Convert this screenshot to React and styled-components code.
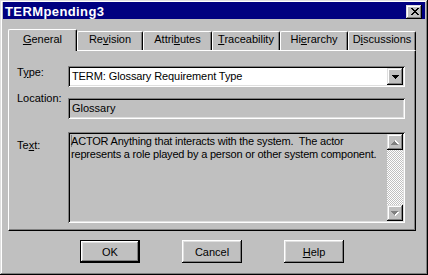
import React from "react";
import styled, { createGlobalStyle } from "styled-components";

const GlobalStyle = createGlobalStyle`
  html, body {
    margin: 0;
    padding: 0;
    background: #c0c0c0;
  }
  body {
    font-family: "Liberation Sans", Arial, sans-serif;
    font-size: 11px;
    color: #000;
  }
`;

const tabs = [
  { id: "general", label: ["", "G", "eneral"], width: 69, active: true },
  { id: "revision", label: ["Re", "v", "ision"], width: 66 },
  { id: "attributes", label: ["Attri", "b", "utes"], width: 69 },
  { id: "traceability", label: ["", "T", "raceability"], width: 68 },
  { id: "hierarchy", label: ["Hi", "e", "rarchy"], width: 68 },
  { id: "discussions", label: ["D", "i", "scussions"], width: 68 },
];

const raised = `
  box-shadow: inset -1px -1px #000, inset 1px 1px #dfdfdf,
    inset -2px -2px #808080, inset 2px 2px #fff;
`;

const sunken = `
  box-shadow: inset 1px 1px #808080, inset -1px -1px #fff,
    inset 2px 2px #000, inset -2px -2px #dfdfdf;
`;

const DownArrow = ({ color = "#000" }) => (
  <svg width="7" height="4" viewBox="0 0 7 4" shapeRendering="crispEdges">
    <path fill={color} d="M0 0h7v1H0zM1 1h5v1H1zM2 2h3v1H2zM3 3h1v1H3z" />
  </svg>
);

// greyed-out arrow with the white emboss under it
const DisabledArrow = ({ up }) => (
  <svg width="8" height="5" viewBox="0 0 8 5" shapeRendering="crispEdges">
    <g transform={up ? "translate(0 5) scale(1 -1)" : undefined}>
      <path fill="#fff" d="M1 1h7v1H1zM2 2h5v1H2zM3 3h3v1H3zM4 4h1v1H4z" />
      <path fill="#808080" d="M0 0h7v1H0zM1 1h5v1H1zM2 2h3v1H2zM3 3h1v1H3z" />
    </g>
  </svg>
);

const App = () => {
  return (
    <>
      <GlobalStyle />
      <Window>
        <TitleBar>
          <Title>TERMpending3</Title>
          <CloseButton aria-label="Close">
            <svg width="8" height="7" viewBox="0 0 8 7" shapeRendering="crispEdges">
              <path
                fill="#000"
                d="M0 0h2v1H0zM6 0h2v1H6zM1 1h2v1H1zM5 1h2v1H5zM2 2h4v1H2zM3 3h2v1H3zM2 4h4v1H2zM1 5h2v1H1zM5 5h2v1H5zM0 6h2v1H0zM6 6h2v1H6z"
              />
            </svg>
          </CloseButton>
        </TitleBar>

        <Body>
          <TabStrip>
            {tabs.map((tab) => (
              <Tab key={tab.id} $active={tab.active} style={{ width: tab.width }}>
                {tab.label[0]}
                <u>{tab.label[1]}</u>
                {tab.label[2]}
              </Tab>
            ))}
          </TabStrip>

          <Panel>
            <FieldRow>
              <Label>
                T<u>y</u>pe:
              </Label>
              <Combo>
                <ComboText>TERM: Glossary Requirement Type</ComboText>
                <DropButton>
                  <DownArrow />
                </DropButton>
              </Combo>
            </FieldRow>

            <FieldRow $gap={11}>
              <Label $nudge={-6}>Location:</Label>
              <ReadField>Glossary</ReadField>
            </FieldRow>

            <FieldRow $gap={13}>
              <Label $nudge={7}>
                Te<u>x</u>t:
              </Label>
              <TextBox>
                <TextContent>
                  <Caret />
                  {"ACTOR Anything that interacts with the system.  The actor represents a role played by a person or other system component."}
                </TextContent>
                <ScrollBar>
                  <ScrollButton>
                    <DisabledArrow up />
                  </ScrollButton>
                  <ScrollTrack />
                  <ScrollButton>
                    <DisabledArrow />
                  </ScrollButton>
                </ScrollBar>
              </TextBox>
            </FieldRow>
          </Panel>

          <ButtonRow>
            <PushButton $default>OK</PushButton>
            <PushButton>Cancel</PushButton>
            <PushButton>
              <u>H</u>elp
            </PushButton>
          </ButtonRow>
        </Body>
      </Window>
    </>
  );
};

const Window = styled.div`
  width: 428px;
  height: 275px;
  box-sizing: border-box;
  padding: 2px 3px 3px 3px;
  background: #c0c0c0;
  display: flex;
  flex-direction: column;
  ${raised}
`;

const TitleBar = styled.div`
  height: 17px;
  background: #000080;
  display: flex;
  align-items: center;
  justify-content: space-between;
  padding: 0 3px 0 2px;
`;

const Title = styled.div`
  color: #fff;
  font-weight: bold;
  font-size: 13px;
  letter-spacing: 0.4px;
  line-height: 17px;
  padding-top: 1px;
`;

const CloseButton = styled.button`
  width: 16px;
  height: 14px;
  margin-top: 2px;
  padding: 0 0 1px 1px;
  border: none;
  background: #c0c0c0;
  display: flex;
  align-items: center;
  justify-content: center;
  ${raised}
`;

const Body = styled.div`
  flex: 1;
  display: flex;
  flex-direction: column;
  padding: 10px 9px 0 5px;
`;

const TabStrip = styled.div`
  display: flex;
  align-items: flex-end;
  height: 21px;
`;

const Tab = styled.div`
  box-sizing: border-box;
  height: ${(p) => (p.$active ? 22 : 19)}px;
  margin-bottom: ${(p) => (p.$active ? -1 : 0)}px;
  padding-top: ${(p) => (p.$active ? 3 : 1)}px;
  position: relative;
  z-index: ${(p) => (p.$active ? 1 : 0)};
  background: #c0c0c0;
  border-top: 1px solid #fff;
  border-left: 1px solid #fff;
  border-right: 1px solid #000;
  border-radius: 2px 2px 0 0;
  box-shadow: inset -1px 0 #808080;
  text-align: center;
  line-height: 13px;
  white-space: nowrap;
`;

const Panel = styled.div`
  height: 181px;
  box-sizing: border-box;
  border-top: 1px solid #fff;
  border-left: 1px solid #fff;
  border-right: 1px solid #000;
  border-bottom: 1px solid #000;
  box-shadow: inset -1px -1px #808080;
  padding: 15px 10px 7px 8px;
  display: flex;
  flex-direction: column;
`;

const FieldRow = styled.div`
  display: grid;
  grid-template-columns: 51px 1fr;
  align-items: start;
  margin-top: ${(p) => p.$gap || 0}px;
`;

const Label = styled.div`
  line-height: 13px;
  margin-top: ${(p) => p.$nudge || 0}px;
  white-space: nowrap;
`;

const Combo = styled.div`
  height: 21px;
  box-sizing: border-box;
  padding: 2px;
  background: #fff;
  display: flex;
  align-items: center;
  ${sunken}
`;

const ComboText = styled.div`
  flex: 1;
  padding-left: 2px;
  line-height: 13px;
  letter-spacing: -0.1px;
`;

const DropButton = styled.div`
  width: 16px;
  height: 17px;
  background: #c0c0c0;
  display: flex;
  align-items: center;
  justify-content: center;
  ${raised}
`;

const ReadField = styled.div`
  height: 21px;
  box-sizing: border-box;
  padding: 2px 4px;
  display: flex;
  align-items: center;
  line-height: 13px;
  ${sunken}
`;

const TextBox = styled.div`
  height: 91px;
  box-sizing: border-box;
  padding: 2px;
  display: flex;
  ${sunken}
`;

const TextContent = styled.div`
  flex: 1;
  padding: 1px 1px 0 1px;
  line-height: 13px;
  letter-spacing: -0.2px;
  white-space: pre-wrap;
`;

const Caret = styled.span`
  display: inline-block;
  width: 1px;
  height: 12px;
  margin-right: -1px;
  vertical-align: -2px;
  background: #808080;
`;

const ScrollBar = styled.div`
  width: 16px;
  display: flex;
  flex-direction: column;
`;

const ScrollButton = styled.div`
  height: 16px;
  background: #c0c0c0;
  display: flex;
  align-items: center;
  justify-content: center;
  ${raised}
`;

const ScrollTrack = styled.div`
  flex: 1;
  background: repeating-conic-gradient(#c0c0c0 0 25%, #fff 0 50%) 0 0 / 2px 2px;
`;

const ButtonRow = styled.div`
  display: flex;
  justify-content: center;
  gap: 42px;
  margin-top: 9px;
`;

const PushButton = styled.button`
  width: 60px;
  height: 23px;
  box-sizing: border-box;
  padding: 0;
  font-family: inherit;
  font-size: 11px;
  color: #000;
  background: #c0c0c0;
  border: ${(p) => (p.$default ? "1px solid #000" : "none")};
  box-shadow: inset -1px -1px #000, inset 1px 1px #fff,
    inset -2px -2px #808080, inset 2px 2px #dfdfdf;
`;

export default App;
